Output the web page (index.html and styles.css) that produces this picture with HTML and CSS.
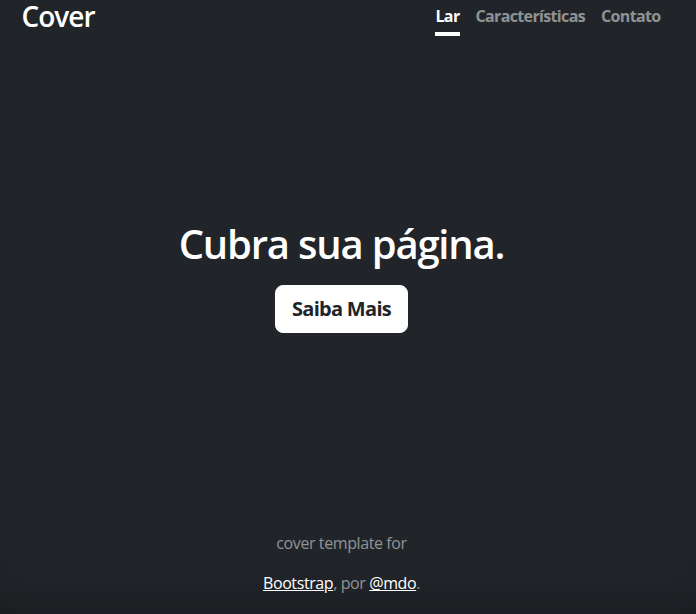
FILE: index.html
```html
<!DOCTYPE html>
<html lang="pt">
<head>
<meta charset="utf-8">
<title>Cover</title>
<link rel="stylesheet" href="styles.css">
</head>
<body>
<div class="page">
  <div class="cover">
    <header class="masthead">
      <h3 class="brand">Cover</h3>
      <nav class="nav">
        <a class="nav-link active" href="#">Lar</a>
        <a class="nav-link" href="#">Características</a>
        <a class="nav-link" href="#">Contato</a>
      </nav>
    </header>
    <main class="hero">
      <h1 class="title">Cubra sua página.</h1>
      <a class="btn" href="#">Saiba Mais</a>
    </main>
    <footer class="footer">
      <p>cover template for</p>
      <p><a href="#">Bootstrap</a>, por <a href="#">@mdo</a>.</p>
    </footer>
  </div>
</div>
</body>
</html>
```

FILE: styles.css
```css
* { box-sizing: border-box; }
html, body { height: 100%; }
body {
  margin: 0;
  background: #212529;
  color: #fff;
  font-family: "Open Sans", "Noto Sans", sans-serif;
  font-size: 16px;
  line-height: 1.5;
  box-shadow: inset 0 -30px 50px -30px rgba(0,0,0,.35);
}
.page {
  width: 683px;
  height: 100%;
}
.cover {
  max-width: 672px;
  height: 100%;
  margin: 0 auto;
  padding: 0 16px 3px;
  display: flex;
  flex-direction: column;
}
.masthead {
  display: flex;
  justify-content: space-between;
  align-items: flex-start;
}
.brand {
  margin: 0;
  font-size: 28px;
  font-weight: 600;
  line-height: 1.2;
  letter-spacing: -1px;
}
.nav { display: flex; gap: 16px; margin-right: 1px; }
.nav-link {
  padding: 4px 0;
  font-weight: 700;
  letter-spacing: -0.65px;
  color: rgba(255,255,255,.5);
  text-decoration: none;
  border-bottom: 4px solid transparent;
}
.nav-link.active { color: #fff; border-bottom-color: #fff; }
.hero {
  margin: auto 0;
  display: flex;
  flex-direction: column;
  align-items: center;
  padding-bottom: 14px;
}
.title {
  margin: 0 0 17px;
  font-size: 40px;
  font-weight: 600;
  line-height: 1.2;
  letter-spacing: -1.2px;
}
.btn {
  display: inline-block;
  padding: 8px 16px;
  font-size: 20px;
  line-height: 1.5;
  font-weight: 700;
  letter-spacing: -0.7px;
  color: #212529;
  background: #fff;
  border: 1px solid #fff;
  border-radius: 8px;
  text-decoration: none;
}
.footer {
  text-align: center;
  color: rgba(255,255,255,.5);
  letter-spacing: -0.4px;
}
.footer p { margin: 0 0 16px; }
.footer a { color: #fff; }
```
